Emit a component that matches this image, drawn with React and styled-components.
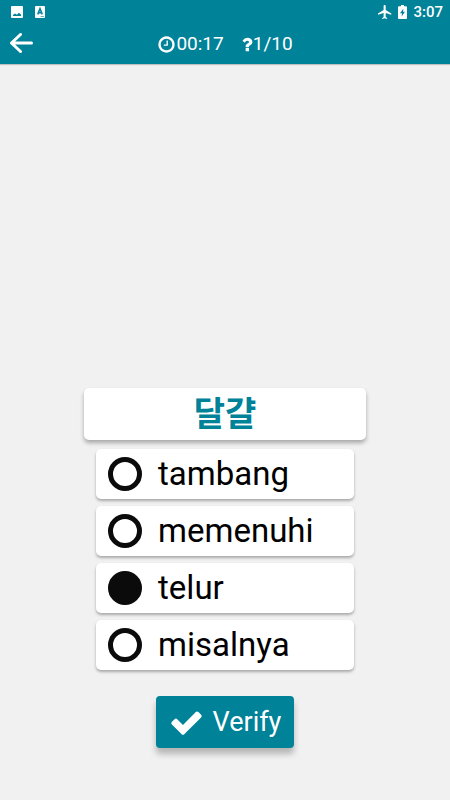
import React, { useState } from 'react';
import styled, { createGlobalStyle } from 'styled-components';

const words = ['tambang', 'memenuhi', 'telur', 'misalnya'];

const App = () => {
  const [selected, setSelected] = useState('telur');

  return (
    <>
      <GlobalStyle />
      <Screen>
        <Header>
          <StatusBar>
            <StatusGroup>
              <svg width="12" height="12" viewBox="0 0 12 12" aria-hidden="true">
                <path fill="#fff" fillRule="evenodd" d="M1 0h10a1 1 0 0 1 1 1v10a1 1 0 0 1-1 1H1a1 1 0 0 1-1-1V1a1 1 0 0 1 1-1zM2 10h8V8.5L7.8 6.7 6 8.8 4 7.4 2 9z" />
              </svg>
              <svg width="10" height="12" viewBox="0 0 10 12" aria-hidden="true">
                <rect width="10" height="12" rx="1" fill="#fff" />
                <path fill="none" stroke="#008299" strokeWidth="1.5" d="M2.7 8.4 5 2.6l2.3 5.8M3.5 6.7h3" />
                <path stroke="#008299" strokeWidth="0.6" d="M5.5 10.5H9" />
              </svg>
            </StatusGroup>
            <StatusGroup $end>
              <svg width="14" height="14" viewBox="2.5 2 19 20" aria-hidden="true">
                <path fill="#fff" d="M21 16v-2l-8-5V3.500C13 2.670 12.330 2 11.500 2S10 2.670 10 3.500V9l-8 5v2l8-2.500V19l-2 1.500V22l3.500-1 3.500 1v-1.500L13 19v-5.500l8 2.500z" />
              </svg>
              <svg width="9" height="14" viewBox="0 0 9 14" aria-hidden="true">
                <path fill="#fff" fillRule="evenodd" d="M3 0h3v1.200h2a1 1 0 0 1 1 1V13a1 1 0 0 1-1 1H1a1 1 0 0 1-1-1V2.200a1 1 0 0 1 1-1h2zM5.400 3.500 2 8.200h2L3.600 11.500 7 6.800H5z" />
              </svg>
              <Clock>3:07</Clock>
            </StatusGroup>
          </StatusBar>
          <Toolbar>
            <BackButton type="button" aria-label="Back">
              <svg width="24" height="22" viewBox="0 0 24 22" aria-hidden="true">
                <path fill="none" stroke="#fff" strokeWidth="3" strokeLinecap="round" strokeLinejoin="round" d="M11.500 1.500 2.500 10l9 8.500M3 10h19.500" />
              </svg>
            </BackButton>
            <Stats>
              <Stat>
                <svg width="19" height="19" viewBox="0 0 1792 1792" aria-hidden="true">
                  <path fill="currentColor" d="M1024 544v448q0 14-9 23t-23 9h-320q-14 0-23-9t-9-23v-64q0-14 9-23t23-9h224v-352q0-14 9-23t23-9h64q14 0 23 9t9 23zm416 352q0-148-73-273t-198-198-273-73-273 73-198 198-73 273 73 273 198 198 273 73 273-73 198-198 73-273zm224 0q0 209-103 385.500t-279.500 279.500-385.500 103-385.500-103-279.500-279.500-103-385.500 103-385.500 279.500-279.500 385.500-103 385.500 103 279.500 279.500 103 385.500z" />
                </svg>
                00:17
              </Stat>
              <Stat>
                <svg width="12" height="19" viewBox="330 0 1132 1792" aria-hidden="true">
                  <path fill="currentColor" d="M1088 1256v240q0 16-12 28t-28 12h-240q-16 0-28-12t-12-28v-240q0-16 12-28t28-12h240q16 0 28 12t12 28zm316-600q0 54-15.500 101t-35 76.500-55 59.500-57.500 43.500-61 35.500q-41 23-68.500 65t-27.500 67q0 17-12 32.500t-28 15.500h-240q-15 0-25.500-18.500t-10.500-37.500v-45q0-83 65-156.500t143-108.500q59-27 84-56t25-76q0-42-46.500-74t-107.500-32q-65 0-108 29-35 25-107 115-13 16-31 16-12 0-25-8l-164-125q-13-10-15.500-25t5.500-28q160-266 464-266 80 0 161 31t146 83 106 127.500 41 158.500z" />
                </svg>
                1/10
              </Stat>
            </Stats>
          </Toolbar>
        </Header>
        <Quiz onSubmit={(e) => e.preventDefault()}>
          <Question id="question" lang="ko">달걀</Question>
          <Options role="radiogroup" aria-labelledby="question">
            {words.map((word) => (
              <Option key={word}>
                <Radio
                  type="radio"
                  name="answer"
                  value={word}
                  checked={selected === word}
                  onChange={() => setSelected(word)}
                />
                <span>{word}</span>
              </Option>
            ))}
          </Options>
          <VerifyButton type="submit">
            <svg width="35" height="35" viewBox="0 0 1792 1792" aria-hidden="true">
              <path fill="currentColor" d="M1671 566q0 40-28 68l-724 724-136 136q-28 28-68 28t-68-28l-136-136-362-362q-28-28-28-68t28-68l136-136q28-28 68-28t68 28l294 295 656-657q28-28 68-28t68 28l136 136q28 28 28 68z" />
            </svg>
            Verify
          </VerifyButton>
        </Quiz>
      </Screen>
    </>
  );
};

const GlobalStyle = createGlobalStyle`
  * {
    box-sizing: border-box;
  }

  body {
    margin: 0;
    background: #f1f1f1;
    font-family: Roboto, "Noto Sans CJK KR", sans-serif;
  }
`;

const Screen = styled.div`
  display: flex;
  flex-direction: column;
  min-height: 100vh;
`;

const Header = styled.header`
  color: #fff;
  background: #008299;
  box-shadow: 0 1px 1px rgba(0, 0, 0, 0.2);
`;

const StatusBar = styled.div`
  display: flex;
  align-items: center;
  justify-content: space-between;
  height: 24px;
  padding: 0 7px 0 11px;
`;

const StatusGroup = styled.div`
  display: flex;
  align-items: center;
  gap: ${(props) => (props.$end ? '6px' : '12px')};
`;

const Clock = styled.span`
  font-size: 15px;
  font-weight: 500;
  line-height: 24px;
`;

const Toolbar = styled.div`
  display: grid;
  grid-template-columns: 1fr auto 1fr;
  align-items: center;
  height: 40px;
  padding: 0 9px;
`;

const BackButton = styled.button`
  display: flex;
  justify-self: start;
  padding: 0;
  border: 0;
  color: inherit;
  background: none;
  cursor: pointer;
`;

const Stats = styled.div`
  display: flex;
  gap: 17px;
`;

const Stat = styled.span`
  display: flex;
  align-items: center;
  font-size: 19px;
  line-height: 24px;
`;

const Quiz = styled.form`
  display: flex;
  flex: 1;
  flex-direction: column;
  align-items: center;
  justify-content: flex-end;
  padding: 24px 0 52px;
`;

const Question = styled.h1`
  width: 62.5%;
  margin: 0 0 9px;
  border-radius: 5px;
  color: #008299;
  background: #fff;
  box-shadow: 0 3px 4px rgba(0, 0, 0, 0.3);
  font-size: 34px;
  font-weight: 700;
  line-height: 52px;
  text-align: center;
`;

const Options = styled.div`
  display: flex;
  flex-direction: column;
  gap: 7px;
  width: 57.3%;
  margin-bottom: 26px;
`;

const Option = styled.label`
  display: flex;
  align-items: center;
  gap: 16px;
  height: 50px;
  padding: 0 12px;
  border-radius: 5px;
  color: #000;
  background: #fff;
  box-shadow: 0 2px 3px rgba(0, 0, 0, 0.3);
  font-size: 33px;
  line-height: 50px;
  cursor: pointer;
`;

const Radio = styled.input`
  appearance: none;
  flex: none;
  width: 34px;
  height: 34px;
  margin: 0;
  border: 5px solid #0b0b0b;
  border-radius: 50%;
  cursor: pointer;

  &:checked {
    background: #0b0b0b;
  }
`;

const VerifyButton = styled.button`
  display: flex;
  align-items: center;
  gap: 9px;
  height: 52px;
  padding: 0 13px;
  border: 0;
  border-radius: 4px;
  color: #fff;
  background: #008299;
  box-shadow: 0 6px 6px rgba(0, 0, 0, 0.25);
  font-family: inherit;
  font-size: 27px;
  cursor: pointer;
`;

export default App;
